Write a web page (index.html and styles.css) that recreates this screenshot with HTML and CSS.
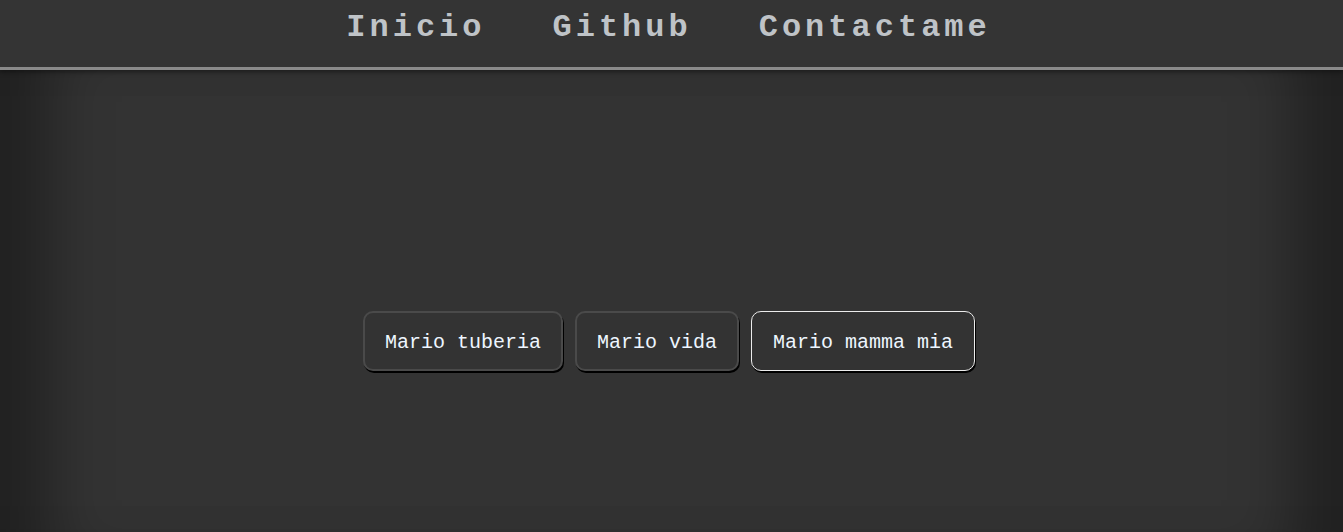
FILE: index.html
```html
<!DOCTYPE html>
<html lang="es">
<head>
<meta charset="utf-8">
<title>Mario</title>
<link rel="stylesheet" href="styles.css">
</head>
<body>
<header class="topbar">
  <nav class="nav">
    <a class="nav-link" href="#">Inicio</a>
    <a class="nav-link" href="#">Github</a>
    <a class="nav-link" href="#">Contactame</a>
  </nav>
</header>
<main class="stage">
  <div class="buttons">
    <button class="btn">Mario tuberia</button>
    <button class="btn">Mario vida</button>
    <button class="btn btn-active">Mario mamma mia</button>
  </div>
</main>
</body>
</html>
```
FILE: styles.css
```css
html, body {
  margin: 0;
  padding: 0;
  height: 100%;
}
body {
  background: #333333;
  font-family: "Liberation Mono", "Courier New", monospace;
  overflow: hidden;
}
.topbar {
  height: 67px;
  background: #343434;
  border-bottom: 3px solid #8a8a8a;
  box-shadow: 0 2px 5px rgba(0,0,0,0.4);
  display: flex;
  justify-content: center;
  position: relative;
  z-index: 1;
}
.nav {
  display: flex;
  gap: 67px;
  padding-top: 10px;
  padding-right: 6px;
}
.nav-link {
  color: #bfc3c7;
  text-decoration: none;
  font-weight: bold;
  font-size: 32px;
  letter-spacing: 4px;
  line-height: 36px;
}
.stage {
  height: calc(100% - 70px);
  box-shadow: inset 90px 0 60px -40px rgba(0,0,0,0.35), inset -90px 0 60px -40px rgba(0,0,0,0.35);
  display: flex;
  justify-content: center;
  padding-top: 241px;
  padding-right: 5px;
  box-sizing: border-box;
}
.buttons {
  display: flex;
  gap: 12px;
  align-items: flex-start;
}
.btn {
  font-family: "Liberation Mono", "Courier New", monospace;
  font-size: 20px;
  color: #eef6ff;
  background: #333333;
  border: 2px solid #4a4a4a;
  border-radius: 10px;
  padding: 18px 20px 15px;
  line-height: 23px;
  box-shadow: 1px 2px 0 #000;
  cursor: pointer;
}
.btn-active {
  border-color: #ececec;
  border-width: 1px;
  padding: 19px 21px 16px;
}
```
